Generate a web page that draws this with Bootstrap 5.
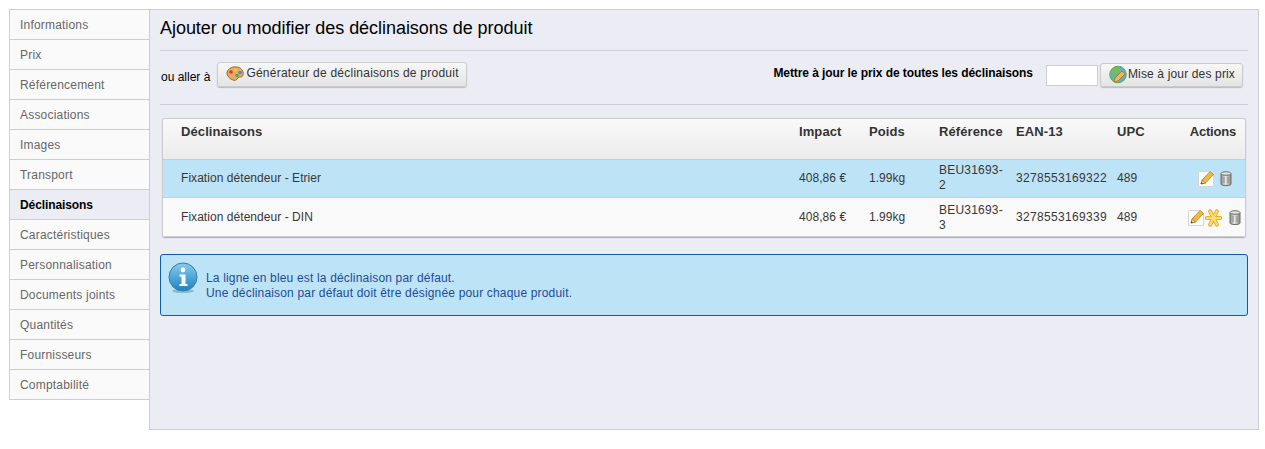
<!DOCTYPE html>
<html lang="fr">
<head>
  <meta charset="UTF-8">
  <meta name="viewport" content="width=device-width, initial-scale=1">
  <title>Déclinaisons</title>
  <link href="https://cdn.jsdelivr.net/npm/bootstrap@5.3.0/dist/css/bootstrap.min.css" rel="stylesheet">
  <style>
    body {
      font-family: "Liberation Sans", Arial, sans-serif;
      font-size: 12px;
      color: #333;
      background: #fff;
      padding: 9px 6px 0 9px;
      line-height: 15px;
    }
    .tab-side {
      width: 140px;
      flex: none;
      border: 1px solid #ccced7;
      border-right: 0;
      border-bottom: 0;
      align-self: flex-start;
    }
    .tab-side a {
      display: block;
      height: 30px;
      padding: 8px 10px 0;
      color: #666;
      background: #fafafa;
      text-decoration: none;
      letter-spacing: .2px;
      border-bottom: 1px solid #ccced7;
    }
    .tab-side a.on {
      color: #000;
      font-weight: bold;
      letter-spacing: -.1px;
      background: #ebecf4;
    }
    .tab-panel {
      flex: 1;
      height: 421px;
      background: #ebecf4;
      border: 1px solid #ccced7;
      padding: 0 10px;
    }
    .page-title {
      font-size: 18px;
      font-weight: normal;
      color: #000;
      line-height: 22px;
      letter-spacing: -.04px;
      margin: 0;
      padding: 7px 0 11px;
      height: 41px;
      border-bottom: 1px solid #ccced7;
    }
    .tool-row {
      height: 54px;
      border-bottom: 1px solid #ccced7;
      padding: 0 5px 7px 1px;
      color: #000;
    }
    .go-label { margin: 6px 7px 0 0; }
    .ps-btn {
      display: inline-flex;
      align-items: center;
      height: 25px;
      padding: 0 8px;
      color: #333;
      font-size: 12px;
      letter-spacing: .24px;
      border: 1px solid #ccc;
      border-radius: 3px;
      background: linear-gradient(#f7f7f7, #e4e4e4);
      box-shadow: 0 1px 1px #bbb;
    }
    .gen-btn { padding: 0 7px 1px 8px; gap: 2px; }
    .gen-btn svg { margin-top: 1px; }
    .maj-btn { height: 24px; letter-spacing: .15px; margin-top: 1px; padding-right: 7px; gap: 1px; }
    .maj-label { letter-spacing: -.08px; margin: -2px 13px 0 0; }
    .price-box {
      width: 52px;
      height: 21px;
      margin: 3px 2px 0 0;
      border: 1px solid #ccced7;
      background: #fff;
    }
    .tbl-wrap {
      margin: 13px 2px 0;
      border: 1px solid #ccc;
      border-bottom: 0;
      border-radius: 3px;
      box-shadow: 0 1px 1px #aaa;
      overflow: hidden;
    }
    .var-table {
      width: 100%;
      table-layout: fixed;
      border-collapse: collapse;
      color: #383838;
    }
    .var-table th {
      height: 40px;
      padding: 5px 0 0 8px;
      font-size: 13px;
      letter-spacing: .1px;
      vertical-align: top;
      color: #333;
      background: linear-gradient(#f9f9f9, #ececec);
      border-bottom: 1px solid #ccc;
    }
    .var-table td {
      height: 39px;
      padding: 2px 5px 0 8px;
      letter-spacing: .05px;
      background: #f9f9f9;
      border-bottom: 1px solid #ccc;
    }
    .var-table tr.def td { background: #bde3f7; height: 38px; padding-top: 0; }
    .var-table .first { padding-left: 18px; }
    .var-table .act { text-align: right; white-space: nowrap; }
    .var-table th.act { padding-right: 9px; letter-spacing: -.2px; }
    .var-table td.act { padding-right: 13px; }
    .var-table tr:not(.def) td.act { padding-right: 4px; }
    .var-table td.ref-col { letter-spacing: .2px; padding-right: 4px; }
    .var-table td.ean-col { padding: 0 0 0 8px; letter-spacing: .32px; }
    .var-table tr:not(.def) td.ean-col { padding-top: 2px; }
    .var-table svg { vertical-align: middle; }
    .can-gap { margin-left: 6px; }
    .star-ico { margin: 0 7px 0 1px; }
    .hint-box {
      display: flex;
      height: 62px;
      margin-top: 17px;
      padding: 7px;
      background: #bde3f7;
      border: 1px solid #0a5ea8;
      border-radius: 3px;
      color: #1f4c96;
      letter-spacing: .17px;
    }
    .hint-box p { margin: 9px 0 0 8px; }
  </style>
</head>
<body>

<svg width="0" height="0" class="position-absolute">
  <defs>
    <linearGradient id="can" x1="0" y1="0" x2="1" y2="0"><stop offset="0" stop-color="#8f8f8a"/><stop offset=".45" stop-color="#e2e2de"/><stop offset="1" stop-color="#8b8b86"/></linearGradient>
    <linearGradient id="ig" x1="0" y1="0" x2="0" y2="1"><stop offset="0" stop-color="#8accee"/><stop offset="1" stop-color="#1b82c4"/></linearGradient>
    <symbol id="ico-edit" viewBox="0 0 16 17">
      <path d="M.5 1.500h11l4 3v12H.5z" fill="#fff" stroke="#d6d6cc"/>
      <path d="M3 14l1.200-4L12 1.500 15.500 4.500l-8 8.500z" fill="#f2b93c" stroke="#b87d26" stroke-width=".8"/>
      <path d="M3 14l1.200-4 3.300 3z" fill="#f3dcb0" stroke="#8a5a24" stroke-width=".6"/>
      <path d="M3 14l.5-1.800 1.400 1.200z" fill="#3c2a16"/>
    </symbol>
    <symbol id="ico-can" viewBox="0 0 12 15">
      <path d="M1 2.500v10.500c0 1 2 1.500 5 1.500s5-.5 5-1.500V2.500z" fill="url(#can)" stroke="#6f6f69"/>
      <ellipse cx="6" cy="2.500" rx="5" ry="1.800" fill="#e4e4e0" stroke="#6f6f69"/>
      <path d="M4 6v6M8 6v6" stroke="#80807a" stroke-width=".8"/>
    </symbol>
  </defs>
</svg>

<div class="d-flex">
  <div class="tab-side">
    <a href="#">Informations</a>
    <a href="#">Prix</a>
    <a href="#">Référencement</a>
    <a href="#">Associations</a>
    <a href="#">Images</a>
    <a href="#">Transport</a>
    <a href="#" class="on">Déclinaisons</a>
    <a href="#">Caractéristiques</a>
    <a href="#">Personnalisation</a>
    <a href="#">Documents joints</a>
    <a href="#">Quantités</a>
    <a href="#">Fournisseurs</a>
    <a href="#">Comptabilité</a>
  </div>

  <div class="tab-panel">
    <h4 class="page-title">Ajouter ou modifier des déclinaisons de produit</h4>

    <div class="tool-row d-flex align-items-center justify-content-between">
      <div class="d-flex align-items-center">
        <span class="go-label">ou aller à</span>
        <span class="ps-btn gen-btn">
          <svg width="18" height="16" viewBox="0 0 18 16"><path d="M1 8C0 4 6 0 10 1c5 0 8 4 7 8-1 3-3 1-5 3s-2 3-5 2-5-3-6-6z" fill="#e8a868" stroke="#a8642e"/><circle cx="5" cy="6" r="1.800" fill="#d9382b"/><circle cx="9.500" cy="4" r="1.800" fill="#f0c82a"/><circle cx="14" cy="6.500" r="1.800" fill="#3f8fe0"/><circle cx="11" cy="9.500" r="1.800" fill="#4fb03a"/></svg>
          Générateur de déclinaisons de produit
        </span>
      </div>
      <div class="d-flex align-items-center">
        <b class="maj-label">Mettre à jour le prix de toutes les déclinaisons</b>
        <input type="text" class="price-box">
        <span class="ps-btn maj-btn">
          <svg width="18" height="19" viewBox="0 0 18 19"><circle cx="9" cy="9.500" r="8.300" fill="#58aede" stroke="#6aa356"/><path d="M2 7c3-5 7-5 9-3s-2 4-4 5-2 5-3 4-3-4-2-6z" fill="#74bf52"/><path d="M5 17l1-4 7-7 3 3-7 7z" fill="#f0bb3e" stroke="#a8742a" stroke-width=".8"/></svg>
          Mise à jour des prix
        </span>
      </div>
    </div>

    <div class="tbl-wrap">
      <table class="var-table">
        <colgroup>
          <col style="width:628px"><col style="width:70px"><col style="width:70px"><col style="width:77px"><col style="width:101px"><col style="width:53px"><col>
        </colgroup>
        <thead>
          <tr>
            <th class="first">Déclinaisons</th><th>Impact</th><th>Poids</th><th>Référence</th><th>EAN-13</th><th>UPC</th><th class="act">Actions</th>
          </tr>
        </thead>
        <tbody>
          <tr class="def">
            <td class="first">Fixation détendeur - Etrier</td><td>408,86 €</td><td>1.99kg</td><td class="ref-col">BEU31693-2</td><td class="ean-col">3278553169322</td><td>489</td>
            <td class="act"><svg width="16" height="17"><use href="#ico-edit"/></svg><svg width="12" height="15" class="can-gap"><use href="#ico-can"/></svg></td>
          </tr>
          <tr>
            <td class="first">Fixation détendeur - DIN</td><td>408,86 €</td><td>1.99kg</td><td class="ref-col">BEU31693-3</td><td class="ean-col">3278553169339</td><td>489</td>
            <td class="act"><svg width="16" height="17"><use href="#ico-edit"/></svg><svg width="17" height="18" viewBox="0 0 18 18" class="star-ico"><g fill="none" stroke-linecap="round"><path d="M5.500 2l7 14M12.500 2l-7 14M2 9h14" stroke="#e5a52b" stroke-width="4.200"/><path d="M5.500 2l7 14M12.500 2l-7 14M2 9h14" stroke="#ffdc6e" stroke-width="2.400"/></g></svg><svg width="12" height="15"><use href="#ico-can"/></svg></td>
          </tr>
        </tbody>
      </table>
    </div>

    <div class="hint-box">
      <svg width="30" height="32" viewBox="0 0 30 32" class="flex-shrink-0"><ellipse cx="15" cy="29" rx="11" ry="2" fill="#6a9cb5" opacity=".6"/><circle cx="15" cy="15" r="14" fill="url(#ig)" stroke="#3a7f9f"/><circle cx="15" cy="8" r="2.400" fill="#fff"/><path d="M11.500 12.500h6v9.500h2v2h-8v-2h2v-7.500h-2z" fill="#fff"/></svg>
      <p>La ligne en bleu est la déclinaison par défaut.<br>Une déclinaison par défaut doit être désignée pour chaque produit.</p>
    </div>
  </div>
</div>

<script src="https://cdn.jsdelivr.net/npm/bootstrap@5.3.0/dist/js/bootstrap.bundle.min.js"></script>
</body>
</html>
